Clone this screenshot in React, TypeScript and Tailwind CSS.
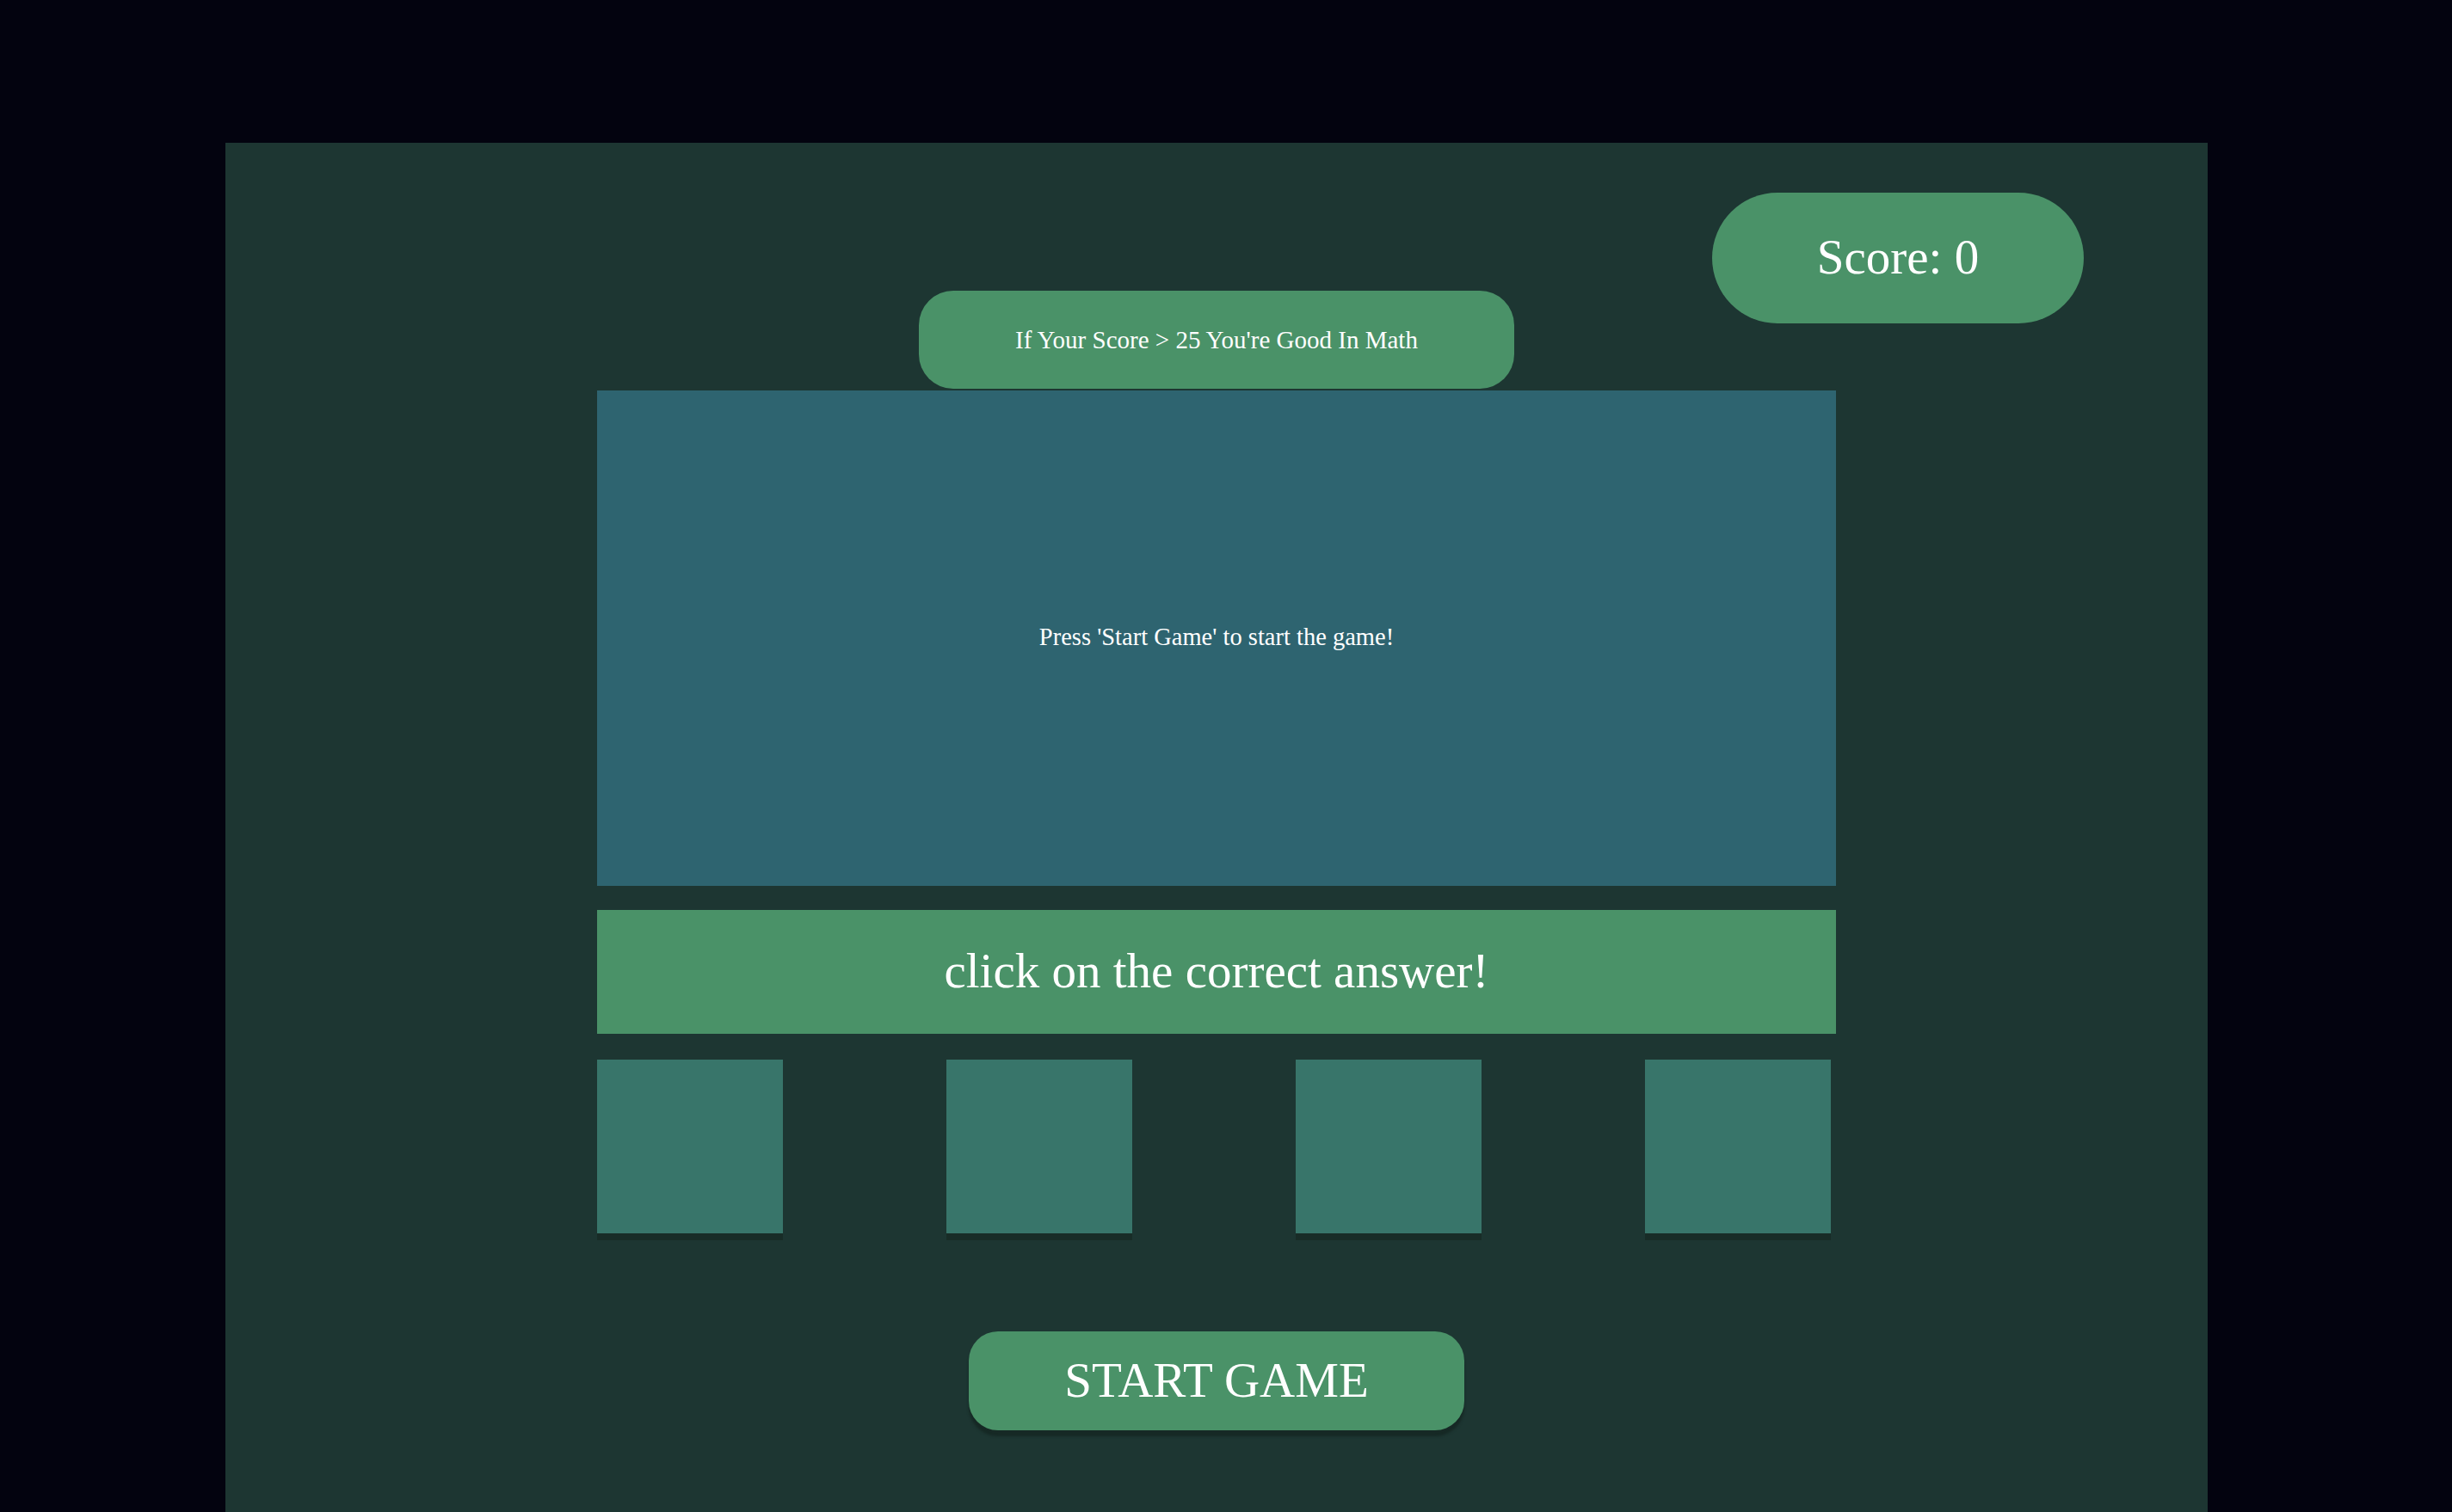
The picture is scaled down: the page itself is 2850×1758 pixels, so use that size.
export default function App() {
  const answers = [0, 1, 2, 3];

  return (
    <div
      className="h-screen overflow-hidden bg-[#03030f] pt-[166px] text-white"
      style={{ fontFamily: '"Liberation Serif", "Times New Roman", serif' }}
    >
      <main className="ml-[262px] flex h-[1700px] w-[2304px] flex-col items-center bg-[#1d3632]">
        {/* score */}
        <div className="flex w-full justify-end pr-[144px] pt-[58px]">
          <div className="flex h-[152px] w-[432px] items-center justify-center rounded-full bg-[#4a9268] pb-[4px] text-[57px] leading-none">
            Score: 0
          </div>
        </div>

        {/* hint */}
        <div className="-mt-[38px] flex h-[114px] w-[692px] items-center justify-center rounded-[40px] bg-[#4a9268] text-[29px] leading-none">
          If Your Score &gt; 25 You're Good In Math
        </div>

        {/* question box */}
        <div className="mt-[2px] flex h-[576px] w-[1440px] items-center justify-center bg-[#2e6470] pb-[2px] text-[28.5px] leading-none">
          Press 'Start Game' to start the game!
        </div>

        <div className="mt-[28px] flex h-[144px] w-[1440px] items-center justify-center bg-[#4a9268] pb-[4px] text-[57px] leading-none">
          click on the correct answer!
        </div>

        {/* answers */}
        <div className="mt-[30px] flex w-[1440px] gap-[190px]">
          {answers.map((a) => (
            <div
              key={a}
              className="h-[202px] w-[216px] bg-[#38756a] shadow-[0_8px_0_#182c27]"
            />
          ))}
        </div>

        <button className="mt-[114px] flex h-[115px] w-[576px] items-center justify-center rounded-[34px] bg-[#4a9268] pb-[3px] text-[57px] leading-none text-white shadow-[0_7px_3px_#162925]">
          START GAME
        </button>
      </main>
    </div>
  );
}
